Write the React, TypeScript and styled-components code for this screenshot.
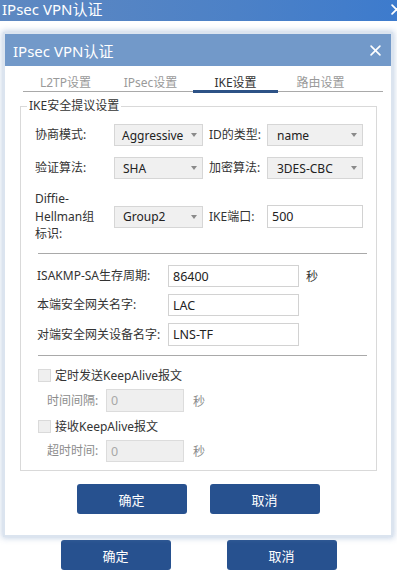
import React from "react";
import styled, { createGlobalStyle } from "styled-components";

const GlobalStyle = createGlobalStyle`
  html, body {
    margin: 0;
    padding: 0;
  }
  body {
    width: 397px;
    height: 573px;
    overflow: hidden;
    background: #fff;
    font-family: "Noto Sans", "Noto Sans CJK SC", sans-serif;
    font-size: 12px;
    color: #333;
  }
`;

const Screen = styled.div`
  position: relative;
  width: 397px;
  height: 573px;
  display: flex;
  flex-direction: column;
  background: #fff;
  overflow: hidden;
`;

const BackTitle = styled.div`
  height: 21px;
  box-sizing: border-box;
  flex: none;
  display: flex;
  justify-content: space-between;
  align-items: flex-start;
  padding: 1px 0 0 2px;
  background: linear-gradient(90deg, #5e88c1 0%, #4c81c7 60%, #3d7bcd 100%);
  color: #fff;
  font-size: 15px;
  line-height: 16px;
  white-space: nowrap;
`;

const BackFooter = styled.div`
  margin-top: auto;
  display: flex;
  justify-content: center;
  gap: 56px;
  padding-bottom: 3px;
`;

const Button = styled.button`
  width: 110px;
  height: 30px;
  border: none;
  border-radius: 3px;
  background: #27518f;
  color: #fff;
  font-family: "Noto Sans CJK SC", sans-serif;
  font-size: 13px;
  padding: 0;
  cursor: pointer;
`;

const Close = styled.span<{ $size: number }>`
  display: inline-flex;
  width: ${(p) => p.$size}px;
  height: ${(p) => p.$size}px;
`;

const BackClose = styled.span`
  margin: 0 -5px 0 0;
`;

const Modal = styled.div`
  position: absolute;
  top: 32px;
  left: 3px;
  width: 390px;
  height: 505px;
  box-sizing: border-box;
  border: 2px solid #dbe4ef;
  background: #fff;
  box-shadow: 0 0 6px 1px rgba(120, 150, 195, 0.45);
  display: flex;
  flex-direction: column;
`;

const ModalTitle = styled.div`
  height: 32px;
  flex: none;
  display: flex;
  align-items: center;
  justify-content: space-between;
  padding: 0 10px 0 8px;
  background: #7299c9;
  color: #fff;
  font-size: 15px;
`;

const Tabs = styled.div`
  display: flex;
  height: 25px;
  margin: 0 8px 0 18px;
  border-bottom: 1px solid #a9a9a9;
`;

const Tab = styled.div<{ $active?: boolean }>`
  position: relative;
  width: 85px;
  display: flex;
  align-items: center;
  justify-content: center;
  padding-top: 7px;
  box-sizing: border-box;
  color: ${(p) => (p.$active ? "#333" : "#9a9a9a")};
  font-size: 12px;

  &::after {
    content: "";
    display: ${(p) => (p.$active ? "block" : "none")};
    position: absolute;
    left: 0;
    right: 0;
    bottom: -2px;
    height: 3px;
    background: #2d5286;
  }
`;

const Group = styled.fieldset`
  margin: 6px 14px 0 15px;
  padding: 0 0 8px 0;
  border: 1px solid #d9d9d9;
  min-width: 0;
`;

const Legend = styled.legend`
  margin-left: 6px;
  padding: 0 2px;
  font-size: 12px;
  line-height: 16px;
  color: #333;
`;

const TopGrid = styled.div`
  display: grid;
  grid-template-columns: 79px 89px 64px 96px;
  grid-template-rows: 22px 22px 53px;
  row-gap: 11px;
  align-items: center;
  padding: 10px 0 0 14px;
`;

const Label = styled.div<{ $indent?: number; $muted?: boolean }>`
  padding-left: ${(p) => p.$indent ?? 0}px;
  color: ${(p) => (p.$muted ? "#8c8c8c" : "#333")};
  font-size: 12px;
  line-height: 17.5px;
  white-space: nowrap;
`;

const SelectBox = styled.div<{ $pad: number }>`
  height: 22px;
  box-sizing: border-box;
  display: flex;
  align-items: center;
  justify-content: space-between;
  padding: 0 5px 0 ${(p) => p.$pad}px;
  background: #f0f0f0;
  border: 1px solid #d6d6d6;
  font-size: 12px;
  color: #222;
`;

const Caret = styled.span`
  width: 0;
  height: 0;
  border-left: 3.5px solid transparent;
  border-right: 3.5px solid transparent;
  border-top: 4px solid #8a8a8a;
`;

const TextBox = styled.div<{ $w: number; $h?: number; $disabled?: boolean }>`
  width: ${(p) => p.$w}px;
  height: ${(p) => p.$h ?? 22}px;
  box-sizing: border-box;
  display: flex;
  align-items: center;
  padding-left: 4px;
  border: 1px solid ${(p) => (p.$disabled ? "#dcdcdc" : "#d2d2d2")};
  background: ${(p) => (p.$disabled ? "#efefef" : "#fff")};
  color: ${(p) => (p.$disabled ? "#a8a8a8" : "#222")};
  font-size: 12.5px;
`;

const Divider = styled.div<{ $top: number }>`
  height: 1px;
  width: 329px;
  margin: ${(p) => p.$top}px 0 0 17px;
  background: #a9a9a9;
`;

const FieldList = styled.div<{ $top: number; $gap: number; $left: number }>`
  display: flex;
  flex-direction: column;
  gap: ${(p) => p.$gap}px;
  padding: ${(p) => p.$top}px 0 0 ${(p) => p.$left}px;
`;

const FieldRow = styled.div`
  display: flex;
  align-items: center;
`;

const FixedLabel = styled(Label)<{ $w: number }>`
  width: ${(p) => p.$w}px;
  flex: none;
`;

const Unit = styled.span<{ $gap: number; $muted?: boolean }>`
  margin-left: ${(p) => p.$gap}px;
  color: ${(p) => (p.$muted ? "#8c8c8c" : "#333")};
  font-size: 12px;
`;

const CheckRow = styled.label`
  display: flex;
  align-items: center;
  height: 16px;
  gap: 4px;
  font-size: 12px;
  color: #333;
`;

const CheckBox = styled.span`
  width: 13px;
  height: 13px;
  box-sizing: border-box;
  border: 1px solid #dadada;
  background: #efefef;
`;

const SubRow = styled(FieldRow)`
  padding-left: 9px;
`;

const Footer = styled.div`
  display: flex;
  justify-content: center;
  gap: 23px;
  margin-top: 13px;
`;

function CloseIcon({ size, stroke }: { size: number; stroke: number }) {
  return (
    <Close $size={size}>
      <svg width={size} height={size} viewBox="0 0 10 10">
        <path d="M1 1L9 9M9 1L1 9" stroke="#fff" strokeWidth={stroke} strokeLinecap="round" />
      </svg>
    </Close>
  );
}

function Select({ value, pad }: { value: string; pad: number }) {
  return (
    <SelectBox $pad={pad}>
      <span>{value}</span>
      <Caret />
    </SelectBox>
  );
}

export default function App() {
  return (
    <Screen>
      <GlobalStyle />
      <BackTitle>
        <span>IPsec VPN认证</span>
        <BackClose>
          <CloseIcon size={11} stroke={1.6} />
        </BackClose>
      </BackTitle>
      <BackFooter>
        <Button>确定</Button>
        <Button>取消</Button>
      </BackFooter>

      <Modal>
        <ModalTitle>
          <span>IPsec VPN认证</span>
          <CloseIcon size={11} stroke={1.5} />
        </ModalTitle>
        <Tabs>
          <Tab>L2TP设置</Tab>
          <Tab>IPsec设置</Tab>
          <Tab $active>IKE设置</Tab>
          <Tab>路由设置</Tab>
        </Tabs>

        <Group>
          <Legend>IKE安全提议设置</Legend>
          <TopGrid>
            <Label>协商模式:</Label>
            <Select value="Aggressive" pad={7} />
            <Label $indent={6}>ID的类型:</Label>
            <Select value="name" pad={9} />

            <Label>验证算法:</Label>
            <Select value="SHA" pad={8} />
            <Label $indent={6}>加密算法:</Label>
            <Select value="3DES-CBC" pad={9} />

            <Label>
              Diffie-
              <br />
              Hellman组
              <br />
              标识:
            </Label>
            <Select value="Group2" pad={8} />
            <Label $indent={6}>IKE端口:</Label>
            <TextBox $w={96} $h={23}>500</TextBox>
          </TopGrid>

          <Divider $top={10} />

          <FieldList $top={11} $gap={7} $left={16}>
            <FieldRow>
              <FixedLabel $w={131}>ISAKMP-SA生存周期:</FixedLabel>
              <TextBox $w={131}>86400</TextBox>
              <Unit $gap={7}>秒</Unit>
            </FieldRow>
            <FieldRow>
              <FixedLabel $w={131}>本端安全网关名字:</FixedLabel>
              <TextBox $w={131}>LAC</TextBox>
            </FieldRow>
            <FieldRow>
              <FixedLabel $w={131}>对端安全网关设备名字:</FixedLabel>
              <TextBox $w={131} $h={23}>LNS-TF</TextBox>
            </FieldRow>
          </FieldList>

          <Divider $top={9} />

          <FieldList $top={11} $gap={6} $left={17}>
            <CheckRow>
              <CheckBox />
              定时发送KeepAlive报文
            </CheckRow>
            <SubRow>
              <FixedLabel $w={59} $muted>时间间隔:</FixedLabel>
              <TextBox $w={78} $h={23} $disabled>0</TextBox>
              <Unit $gap={9} $muted>秒</Unit>
            </SubRow>
            <CheckRow>
              <CheckBox />
              接收KeepAlive报文
            </CheckRow>
            <SubRow>
              <FixedLabel $w={59} $muted>超时时间:</FixedLabel>
              <TextBox $w={78} $h={22} $disabled>0</TextBox>
              <Unit $gap={9} $muted>秒</Unit>
            </SubRow>
          </FieldList>
        </Group>

        <Footer>
          <Button>确定</Button>
          <Button>取消</Button>
        </Footer>
      </Modal>
    </Screen>
  );
}
